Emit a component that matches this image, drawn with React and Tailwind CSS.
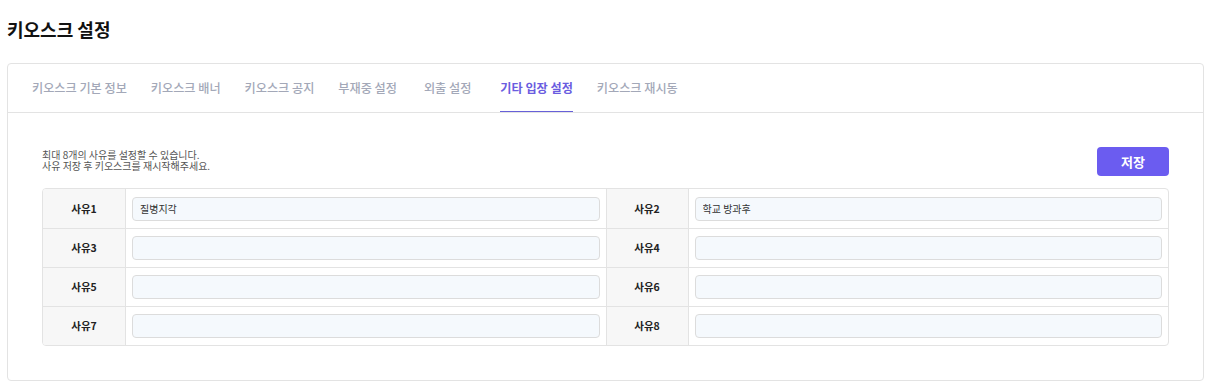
const FONT = { fontFamily: '"Noto Sans CJK KR", "Noto Sans", sans-serif' };

const tabs = [
  { label: "키오스크 기본 정보", cls: "" },
  { label: "키오스크 배너", cls: "" },
  { label: "키오스크 공지", cls: "" },
  { label: "부재중 설정", cls: "" },
  { label: "외출 설정", cls: "ml-[3px]" },
  { label: "기타 입장 설정", cls: "ml-[5px]" },
  { label: "키오스크 재시동", cls: "" },
];

const reasons = ["질병지각", "학교 방과후", "", "", "", "", "", ""];

export default function App() {
  return (
    <div className="min-h-[386px] bg-white px-[7px] pt-[16px]" style={FONT}>
      <h1 className="text-[18px] font-bold leading-[26px] text-[#111]">키오스크 설정</h1>

      <div className="mt-[21px] rounded-[4px] border border-[#e3e3e3] bg-white">
        <nav className="flex h-[49px] items-stretch gap-[24px] border-b border-[#e3e3e3] px-[24px]">
          {tabs.map((t, i) => (
            <button
              key={t.label}
              className={
                "flex items-center border-b-[1.5px] pt-[1px] text-[12.15px] " +
                t.cls +
                " " +
                (i === 5
                  ? "border-[#6760d8] font-bold text-[#6a5ce0]"
                  : "border-transparent font-medium text-[#a3a8b8]")
              }
            >
              {t.label}
            </button>
          ))}
        </nav>

        <div className="px-[34px] pb-[34px] pt-[34px]">
          <div className="flex items-start justify-between">
            <div className="pt-[2px] text-[10px] text-[#555]">
              <p className="leading-[11px]">최대 8개의 사유를 설정할 수 있습니다.</p>
              <p className="leading-[11px]">사유 저장 후 키오스크를 재시작해주세요.</p>
            </div>
            <button className="h-[29px] w-[72px] rounded-[4px] bg-[#6b5cf0] text-[13px] font-bold text-white">
              저장
            </button>
          </div>

          <div className="mt-[12px] grid grid-cols-[82px_1fr_82px_1fr] overflow-hidden rounded-[4px] border border-[#e3e3e3]">
            {reasons.map((r, i) => (
              <div key={i} className="contents">
                <div
                  className={
                    "flex h-[39px] items-center justify-center bg-[#f7f7f7] text-[10.5px] font-bold text-[#222] " +
                    (i % 2 === 1 ? "border-l border-[#e3e3e3] " : "") +
                    (i > 1 ? "border-t border-[#e3e3e3]" : "")
                  }
                >
                  사유{i + 1}
                </div>
                <div
                  className={
                    "flex h-[39px] items-center border-l border-[#e3e3e3] px-[6px] " +
                    (i > 1 ? "border-t border-[#e3e3e3]" : "")
                  }
                >
                  <input
                    defaultValue={r}
                    className="h-[24px] w-full rounded-[4px] border border-[#dcdcdc] bg-[#f5f9fd] px-[7px] text-[10px] text-[#333] outline-none"
                    style={FONT}
                  />
                </div>
              </div>
            ))}
          </div>
        </div>
      </div>
    </div>
  );
}
